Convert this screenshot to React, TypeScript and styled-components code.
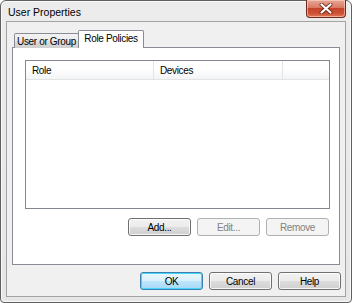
import React from "react";
import styled, { createGlobalStyle, css } from "styled-components";

const GlobalStyle = createGlobalStyle`
  html, body { margin: 0; padding: 0; background: #ffffff; }
  body { font-family: "Liberation Sans", Arial, sans-serif; font-size: 10px; color: #000; }
  * { box-sizing: border-box; }
`;

const Window = styled.div`
  width: 352px;
  height: 303px;
  border: 1px solid #5f5f5f;
  border-radius: 6px 6px 4px 4px;
  background: linear-gradient(#ececec, #e6e6e6);
  box-shadow: inset 0 0 0 1px #fafafa;
  display: flex;
  flex-direction: column;
  padding: 0 5px 5px 5px;
`;

const TitleBar = styled.div`
  height: 20px;
  display: flex;
  align-items: flex-start;
  justify-content: space-between;
`;

const Title = styled.span`
  padding: 5px 0 0 2px;
  font-size: 10.5px;
  color: #000;
`;

const CloseButton = styled.div`
  width: 40px;
  height: 18px;
  margin-top: -1px;
  border: 1px solid #6e2b20;
  border-top: none;
  border-radius: 0 0 4px 4px;
  background: linear-gradient(#e9a796 0%, #d97a63 45%, #c4442b 50%, #cf5337 80%, #e07a55 100%);
  box-shadow: inset 0 0 0 1px rgba(255, 220, 210, 0.55);
  display: flex;
  align-items: center;
  justify-content: center;
`;

const Client = styled.div`
  flex: 1;
  border: 1px solid #a3a3a3;
  background: #f0f0f0;
  display: flex;
  flex-direction: column;
  padding: 8px 5px 6px 5px;
`;

const TabStrip = styled.div`
  height: 18px;
  display: flex;
  align-items: flex-end;
  padding-left: 2px;
  margin-bottom: -1px;
  position: relative;
  z-index: 1;
`;

const Tab = styled.div<{ $selected?: boolean; $width: number }>`
  width: ${(p) => p.$width}px;
  border: 1px solid #898c95;
  border-bottom: none;
  border-radius: 2px 2px 0 0;
  display: flex;
  align-items: center;
  justify-content: center;
  letter-spacing: -0.35px;
  ${(p) =>
    p.$selected
      ? css`
          height: 18px;
          margin-left: -1px;
          background: #ffffff;
          padding-bottom: 2px;
        `
      : css`
          height: 15px;
          background: linear-gradient(#f3f3f3 0%, #ebebeb 50%, #dddddd 51%, #cfcfcf 100%);
          padding-top: 1px;
        `}
`;

const Panel = styled.div`
  flex: 1;
  border: 1px solid #898c95;
  background: #ffffff;
  display: flex;
  flex-direction: column;
  padding: 12px 9px 28px 12px;
`;

const ListView = styled.div`
  flex: 1;
  border: 1px solid #828790;
  background: #ffffff;
  display: flex;
  flex-direction: column;
`;

const HeaderRow = styled.div`
  height: 19px;
  display: flex;
  background: linear-gradient(#ffffff 0%, #ffffff 40%, #f3f4f6 100%);
  border-bottom: 1px solid #e3e4e6;
`;

const HeaderCell = styled.div<{ $width?: number }>`
  ${(p) => (p.$width ? `width: ${p.$width}px;` : "flex: 1;")}
  border-right: ${(p) => (p.$width ? "1px solid #e3e4e6" : "none")};
  padding: 0 0 0 6px;
  display: flex;
  align-items: center;
  letter-spacing: -0.35px;
  color: #000;
`;

const ButtonRow = styled.div<{ $top: number; $inset?: number }>`
  display: flex;
  justify-content: flex-end;
  gap: 6px;
  margin-top: ${(p) => p.$top}px;
  margin-right: ${(p) => p.$inset ?? 0}px;
`;

const Button = styled.div<{ $disabled?: boolean; $default?: boolean }>`
  width: 63px;
  height: 18px;
  border: 1px solid #707070;
  border-radius: 3px;
  display: flex;
  align-items: center;
  justify-content: center;
  letter-spacing: -0.35px;
  background: linear-gradient(#f2f2f2 0%, #ebebeb 50%, #dddddd 51%, #cfcfcf 100%);
  box-shadow: inset 0 0 0 1px rgba(255, 255, 255, 0.8);
  color: #000;
  ${(p) =>
    p.$disabled &&
    css`
      border-color: #adb2b5;
      background: #f4f4f4;
      box-shadow: none;
      color: #838383;
    `}
  ${(p) =>
    p.$default &&
    css`
      border-color: #3c7fb1;
      background: linear-gradient(#eaf6fd 0%, #d9f0fc 50%, #bee6fd 51%, #a7d9f5 100%);
      box-shadow: inset 0 0 0 1px #48d5f9;
    `}
`;

const CloseGlyph = () => (
  <svg width="14" height="11" viewBox="0 0 14 11">
    <path
      d="M2.5 1.5 L11.5 9.5 M11.5 1.5 L2.5 9.5"
      stroke="#5a1f14"
      strokeWidth="4"
      strokeLinecap="round"
      fill="none"
      opacity="0.8"
    />
    <path
      d="M2.5 1.5 L11.5 9.5 M11.5 1.5 L2.5 9.5"
      stroke="#ffffff"
      strokeWidth="2.2"
      strokeLinecap="round"
      fill="none"
    />
  </svg>
);

export default function App() {
  return (
    <>
      <GlobalStyle />
      <Window>
        <TitleBar>
          <Title>User Properties</Title>
          <CloseButton>
            <CloseGlyph />
          </CloseButton>
        </TitleBar>
        <Client>
          <TabStrip>
            <Tab $width={65}>User or Group</Tab>
            <Tab $width={66} $selected>
              Role Policies
            </Tab>
          </TabStrip>
          <Panel>
            <ListView>
              <HeaderRow>
                <HeaderCell $width={128}>Role</HeaderCell>
                <HeaderCell $width={129}>Devices</HeaderCell>
                <HeaderCell />
              </HeaderRow>
            </ListView>
            <ButtonRow $top={9} $inset={1}>
              <Button>Add...</Button>
              <Button $disabled>Edit...</Button>
              <Button $disabled>Remove</Button>
            </ButtonRow>
          </Panel>
          <ButtonRow $top={7} $inset={-1}>
            <Button $default>OK</Button>
            <Button>Cancel</Button>
            <Button>Help</Button>
          </ButtonRow>
        </Client>
      </Window>
    </>
  );
}
